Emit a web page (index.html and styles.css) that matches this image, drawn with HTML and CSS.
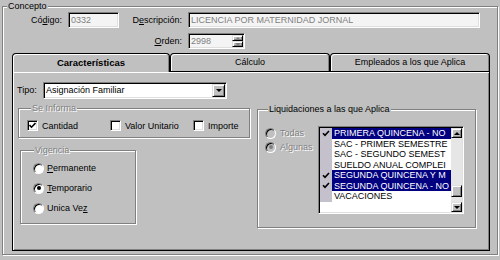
FILE: index.html
```html
<!DOCTYPE html>
<html lang="es">

<head>
    <meta charset="UTF-8">
    <title>Concepto</title>
    <link rel="stylesheet" href="styles.css">
</head>

<body>

    <fieldset class="group concepto">
        <legend>Concepto</legend>

        <div class="head-fields">
            <label class="lbl">Có<u>d</u>igo:</label>
            <div class="edit sunken">0332</div>
            <label class="lbl">D<u>e</u>scripción:</label>
            <div class="edit sunken">LICENCIA POR MATERNIDAD JORNAL</div>
            <label class="lbl lbl-orden"><u>O</u>rden:</label>
            <div class="edit edit-orden sunken">
                <span class="edit-text">2998</span>
                <span class="spin">
                    <span class="spin-btn raised"><span class="arrow-up dim"></span></span>
                    <span class="spin-btn raised"><span class="arrow-down dim"></span></span>
                </span>
            </div>
        </div>

        <div class="tabs">
            <div class="tab tab-active">Características</div>
            <div class="tab">Cálculo</div>
            <div class="tab">Empleados a los que Aplica</div>
        </div>

        <div class="panel">
            <div class="tipo-row">
                <span class="tipo-label">Tipo:</span>
                <div class="combo sunken">
                    <span class="combo-text">Asignación Familiar</span>
                    <span class="combo-btn raised"><span class="arrow-down"></span></span>
                </div>
            </div>

            <div class="panel-body">
                <div class="col-left">
                    <fieldset class="group se-informa">
                        <legend class="disabled">Se Informa</legend>
                        <div class="checks">
                            <div class="opt">
                                <span class="chk">
                                    <svg width="7" height="7" viewBox="0 0 7 7"><path d="M0.5 3 L2.5 5.2 L6.5 1" fill="none" stroke="#000" stroke-width="1.6"/></svg>
                                </span>
                                Cantidad
                            </div>
                            <div class="opt"><span class="chk"></span>Valor Unitario</div>
                            <div class="opt"><span class="chk"></span>Importe</div>
                        </div>
                    </fieldset>

                    <fieldset class="group vigencia">
                        <legend class="disabled">Vigencia</legend>
                        <div class="radios">
                            <div class="opt"><span class="radio"></span><span><u>P</u>ermanente</span></div>
                            <div class="opt"><span class="radio radio-on"><span class="dot"></span></span><span><u>T</u>emporario</span></div>
                            <div class="opt"><span class="radio"></span><span>Unica Ve<u>z</u></span></div>
                        </div>
                    </fieldset>
                </div>

                <fieldset class="group liquidaciones">
                    <legend>Liquidaciones a las que Aplica</legend>
                    <div class="liq-body">
                        <div class="liq-radios">
                            <div class="opt disabled"><span class="radio radio-off"></span>Todas</div>
                            <div class="opt disabled"><span class="radio radio-off"><span class="dot dot-dim"></span></span>Algunas</div>
                        </div>

                        <div class="list sunken">
                            <div class="list-items">
                                <div class="item item-sel"><span class="item-check"><svg width="8" height="7" viewBox="0 0 8 7"><path d="M1 3.2 L3 5.4 L7 1" fill="none" stroke="#000" stroke-width="1.6"/></svg></span><span class="item-text">PRIMERA QUINCENA - NO</span></div>
                                <div class="item"><span class="item-check"></span><span class="item-text">SAC - PRIMER SEMESTRE</span></div>
                                <div class="item"><span class="item-check"></span><span class="item-text">SAC - SEGUNDO SEMEST</span></div>
                                <div class="item"><span class="item-check"></span><span class="item-text">SUELDO ANUAL COMPLEI</span></div>
                                <div class="item item-sel"><span class="item-check"><svg width="8" height="7" viewBox="0 0 8 7"><path d="M1 3.2 L3 5.4 L7 1" fill="none" stroke="#000" stroke-width="1.6"/></svg></span><span class="item-text">SEGUNDA QUINCENA Y M</span></div>
                                <div class="item item-sel"><span class="item-check"><svg width="8" height="7" viewBox="0 0 8 7"><path d="M1 3.2 L3 5.4 L7 1" fill="none" stroke="#000" stroke-width="1.6"/></svg></span><span class="item-text">SEGUNDA QUINCENA - NO</span></div>
                                <div class="item"><span class="item-check"></span><span class="item-text">VACACIONES</span></div>
                            </div>
                            <div class="scrollbar">
                                <span class="scroll-btn raised"><span class="arrow-up"></span></span>
                                <span class="scroll-track">
                                    <span class="thumb raised"></span>
                                </span>
                                <span class="scroll-btn raised"><span class="arrow-down"></span></span>
                            </div>
                        </div>
                    </div>
                </fieldset>
            </div>
        </div>
    </fieldset>

</body>

</html>
```

FILE: styles.css
```css
* {
    box-sizing: border-box;
}

body {
    margin: 0;
    width: 500px;
    height: 260px;
    overflow: hidden;
    background-color: #c0c0c0;
    font-family: "Liberation Sans", Arial, sans-serif;
    font-size: 9px;
    color: #000;
}

/* group boxes */
.group {
    margin: 0;
    padding: 0;
    min-width: 0;
    border: 1px solid #808080;
    box-shadow: inset 1px 1px 0 #fff, 1px 1px 0 #fff;
}

.group legend {
    padding: 0 1px;
    line-height: 10px;
    background-color: #c0c0c0;
}

.disabled {
    color: #808080;
    text-shadow: 1px 1px 0 #fff;
}

.sunken {
    border: 1px solid;
    border-color: #808080 #fff #fff #808080;
    box-shadow: inset 1px 1px 0 #000, inset -1px -1px 0 #dfdfdf;
    padding: 1px;
}

.raised {
    display: flex;
    align-items: center;
    justify-content: center;
    background-color: #c0c0c0;
    border: 1px solid;
    border-color: #dfdfdf #000 #000 #dfdfdf;
    box-shadow: inset 1px 1px 0 #fff, inset -1px -1px 0 #808080;
}

.arrow-up,
.arrow-down {
    width: 0;
    height: 0;
    border-left: 3px solid transparent;
    border-right: 3px solid transparent;
}

.arrow-up {
    border-bottom: 3px solid #000;
}

.arrow-down {
    border-top: 3px solid #000;
}

.arrow-up.dim {
    border-bottom-color: #808080;
}

.arrow-down.dim {
    border-top-color: #808080;
}

/* concepto frame */
.concepto {
    margin: 1px 2px 0 2px;
    padding: 0 0 3px 0;
}

.concepto > legend {
    margin-left: 4px;
    line-height: 11px;
}

.head-fields {
    display: grid;
    grid-template-columns: 65px 51px 69px 292px;
    grid-template-rows: 16px 16px;
    row-gap: 5px;
}

.lbl {
    text-align: right;
    padding-right: 6px;
    line-height: 16px;
}

.lbl-orden {
    grid-column: 3;
}

.edit {
    height: 16px;
    line-height: 12px;
    padding-left: 2px;
    background-color: #f4f4f4;
    color: #808080;
    white-space: nowrap;
    overflow: hidden;
}

.edit-orden {
    grid-column: 4;
    width: 57px;
    display: flex;
    padding-right: 1px;
}

.edit-text {
    flex: 1;
}

.spin {
    width: 11px;
    display: flex;
    flex-direction: column;
}

.spin-btn {
    flex: 1;
}

/* tabs */
.tabs {
    display: flex;
    align-items: flex-start;
    height: 18px;
    margin: 4px 7px 0 9px;
}

.tab {
    width: 160px;
    height: 18px;
    border: 1px solid #000;
    border-bottom: none;
    border-radius: 4px 4px 0 0;
    box-shadow: inset 1px 1px 0 #fff, inset -1px 0 0 #808080;
    text-align: center;
    line-height: 17px;
}

.tab-active {
    position: relative;
    z-index: 1;
    width: 158px;
    height: 19px;
    background-color: #c0c0c0;
    font-size: 9.5px;
    font-weight: bold;
}

.panel {
    height: 180px;
    margin: 0 7px 0 9px;
    padding: 10px 4px 0 4px;
    border: 1px solid #000;
    box-shadow: inset 1px 1px 0 #fff, inset -1px -1px 0 #808080;
}

.tipo-row {
    display: flex;
    height: 16px;
    line-height: 16px;
}

.tipo-label {
    width: 26px;
}

.combo {
    width: 184px;
    height: 17px;
    display: flex;
    background-color: #fff;
}

.combo-text {
    flex: 1;
    line-height: 13px;
    padding-left: 1px;
}

.combo-btn {
    width: 13px;
}

.panel-body {
    display: flex;
    align-items: flex-start;
    margin-top: 5px;
}

.col-left {
    margin-left: 1px;
    width: 232px;
}

/* se informa */
.se-informa {
    width: 232px;
    padding: 7px 0 6px 8px;
}

.se-informa legend {
    margin-left: 4px;
}

.checks {
    display: grid;
    grid-template-columns: 83px 83px 60px;
}

.opt {
    display: flex;
    align-items: center;
    gap: 4px;
    height: 11px;
    white-space: nowrap;
}

.chk {
    width: 11px;
    height: 11px;
    display: flex;
    align-items: center;
    justify-content: center;
    background-color: #fff;
    border: 1px solid;
    border-color: #808080 #fff #fff #808080;
    box-shadow: inset 1px 1px 0 #000, inset -1px -1px 0 #dfdfdf;
}

/* vigencia */
.vigencia {
    width: 116px;
    margin: 7px 0 0 2px;
    padding: 6px 0 8px 12px;
}

.vigencia legend {
    margin-left: 1px;
}

.radios {
    display: flex;
    flex-direction: column;
    gap: 6px;
}

.radios .opt {
    height: 14px;
    gap: 3px;
}

.radio {
    width: 11px;
    height: 11px;
    flex: none;
    display: flex;
    align-items: center;
    justify-content: center;
    border-radius: 50%;
    background-color: #fff;
    border: 1px solid;
    border-color: #808080 #fff #fff #808080;
    box-shadow: inset 1px 1px 0 #000;
}

.radio-off {
    background-color: #c0c0c0;
}

.dot {
    width: 4px;
    height: 4px;
    border-radius: 50%;
    background-color: #000;
}

.dot-dim {
    background-color: #808080;
}

/* liquidaciones */
.liquidaciones {
    width: 219px;
    margin: 1px 0 0 7px;
    padding: 12px 0 13px 7px;
}

.liquidaciones legend {
    margin-left: 3px;
}

.liq-body {
    display: flex;
}

.liq-radios {
    width: 53px;
    display: flex;
    flex-direction: column;
}

.liq-radios .opt {
    height: 14px;
    gap: 4px;
}

.list {
    width: 146px;
    height: 88px;
    display: flex;
    background-color: #fff;
}

.list-items {
    flex: 1;
    overflow: hidden;
}

.item {
    display: flex;
    height: 10.5px;
    line-height: 11px;
}

.item-check {
    width: 12px;
    flex: none;
    display: flex;
    align-items: center;
    justify-content: center;
    background-color: #c4c0cc;
}

.item-text {
    flex: 1;
    padding-left: 2px;
    white-space: nowrap;
    overflow: hidden;
}

.item-sel .item-text {
    background-color: #000080;
    color: #fff;
}

.scrollbar {
    width: 11px;
    display: flex;
    flex-direction: column;
}

.scroll-btn {
    height: 10px;
}

.scroll-track {
    flex: 1;
    background-color: #e6e6e6;
}

.thumb {
    height: 12px;
    margin-top: 47px;
}
```
